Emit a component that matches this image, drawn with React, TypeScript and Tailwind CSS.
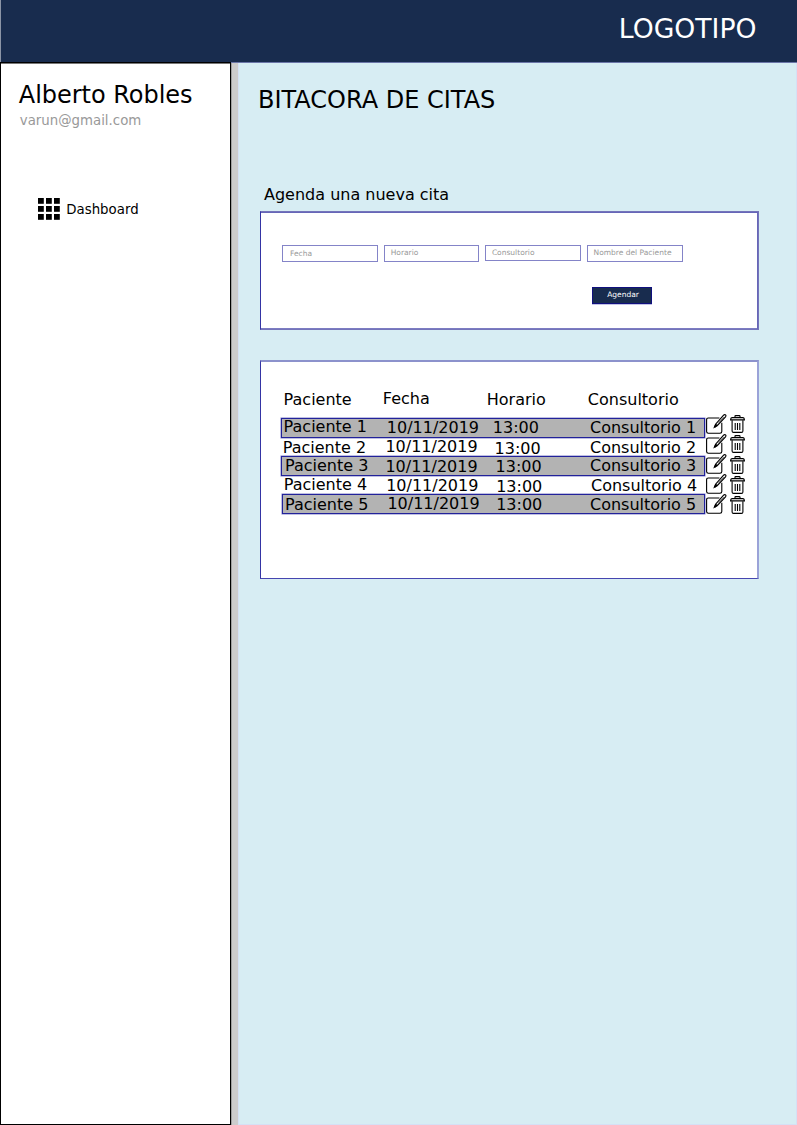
import React from "react";

type Cell = { text: string; at: string };
type Row = { box: string; cells: Cell[] };

const headers: Cell[] = [
  { text: "Paciente", at: "ml-[3.6px] mt-px" },
  { text: "Fecha", at: "ml-[2.8px]" },
  { text: "Horario", at: "ml-[6.8px] mt-px" },
  { text: "Consultorio", at: "ml-[7.8px] mt-px" },
];

const rows: Row[] = [
  {
    box: "ml-px h-5 border border-[#22229a] bg-[#b3b3b3] shadow-[0_0_0_0.5px_#8080c8]",
    cells: [
      { text: "Paciente 1", at: "ml-[1.6px] -mt-[2px]" },
      { text: "10/11/2019", at: "ml-[4.8px] -mt-px" },
      { text: "13:00", at: "ml-[10.8px] -mt-px" },
      { text: "Consultorio 1", at: "ml-[8px] -mt-px" },
    ],
  },
  {
    box: "h-[18px] pl-px",
    cells: [
      { text: "Paciente 2", at: "ml-[1.8px]" },
      { text: "10/11/2019", at: "ml-[4.4px] -mt-px" },
      { text: "13:00", at: "ml-[13.6px] mt-px" },
      { text: "Consultorio 2", at: "ml-[9px]" },
    ],
  },
  {
    box: "ml-px h-5 border border-[#22229a] bg-[#b3b3b3] shadow-[0_0_0_0.5px_#8080c8]",
    cells: [
      { text: "Paciente 3", at: "ml-[3px] -mt-px" },
      { text: "10/11/2019", at: "ml-[3.4px]" },
      { text: "13:00", at: "ml-[13.6px]" },
      { text: "Consultorio 3", at: "ml-[8px] -mt-px" },
    ],
  },
  {
    box: "h-[18px] pl-px",
    cells: [
      { text: "Paciente 4", at: "ml-[2.8px] -mt-px" },
      { text: "10/11/2019", at: "ml-[5.2px]" },
      { text: "13:00", at: "ml-[15.2px] mt-px" },
      { text: "Consultorio 4", at: "ml-[10px]" },
    ],
  },
  {
    box: "ml-[2px] h-5 border border-[#22229a] bg-[#b3b3b3] shadow-[0_0_0_0.5px_#8080c8]",
    cells: [
      { text: "Paciente 5", at: "ml-[2px]" },
      { text: "10/11/2019", at: "ml-[4.4px] -mt-px" },
      { text: "13:00", at: "ml-[13.2px]" },
      { text: "Consultorio 5", at: "ml-[7px]" },
    ],
  },
];

const fields = [
  { label: "Fecha", box: "h-[17px] pl-[7px] pt-[3px]" },
  { label: "Horario", box: "h-[17px] pl-[6px] pt-[2px]" },
  { label: "Consultorio", box: "h-4 pl-[5.5px] pt-[1.5px]" },
  { label: "Nombre del Paciente", box: "h-[17px] pl-[5.5px] pt-[2px]" },
];

const columns = "grid grid-cols-[100px_100px_100px_1fr]";

function EditIcon() {
  return (
    <svg className="block h-5 w-[21px] shrink-0 overflow-visible" viewBox="0 0 21 20" fill="none" stroke="#000">
      <path d="M13.4 4H2.3Q.6 4 .6 5.7V17.6Q.6 19.3 2.3 19.3H14Q15.8 19.3 15.8 17.6V8.8" strokeWidth="1.1" />
      <path d="M8.4 13.2L9.6 10.2L17.6 1.2Q18.7 .1 19.6 .9Q20.4 1.7 19.5 2.8L11.1 11.7Z" fill="#fff" strokeWidth="1.2" />
      <path d="M8.5 13.1L10.9 10.6" strokeWidth="1.8" />
      <path d="M12.6 8.7L17.8 3" strokeWidth=".5" />
    </svg>
  );
}

function TrashIcon() {
  return (
    <svg className="block h-[18px] w-[15px] shrink-0" viewBox="0 0 15 18" fill="none" stroke="#000" strokeWidth="1.1">
      <path d="M5 2.6V1.2Q5 .6 5.7 .6H9.3Q10 .6 10 1.2V2.6" />
      <path d="M1.9 2.7H13.1Q14.3 2.7 14.4 4.9H.6Q.7 2.7 1.9 2.7Z" fill="#fff" strokeWidth="1.2" />
      <path d="M2.1 5.2V16Q2.1 17.4 3.5 17.4H11.5Q12.9 17.4 12.9 16V5.2" />
      <path d="M5.2 8V15M7.5 8V15M9.8 8V15" />
    </svg>
  );
}

function GridIcon() {
  const steps = [0, 8, 16];
  return (
    <svg className="block size-[22px]" viewBox="0 0 22 22">
      {steps.map((y) => steps.map((x) => <rect key={`${x}-${y}`} x={x} y={y} width="5.8" height="5.8" />))}
    </svg>
  );
}

function Cells({ cells }: { cells: Cell[] }) {
  return (
    <>
      {cells.map((c) => (
        <div key={c.text} className="whitespace-nowrap">
          <div className={c.at}>{c.text}</div>
        </div>
      ))}
    </>
  );
}

export default function App() {
  return (
    <div className="flex h-[1125px] w-[797px] flex-col overflow-hidden bg-[#d7edf3] font-['DejaVu_Sans',sans-serif] text-black">
      <header className="flex h-[63px] shrink-0 justify-end border-b border-l border-b-[#6b76a8] border-l-[#8b95a6] bg-[#182c4e] pr-[40.5px] pt-[13px] text-[26.67px] leading-[31px] text-white">
        LOGOTIPO
      </header>
      <div className="flex min-h-0 flex-1">
        <aside className="-mt-px w-[231px] shrink-0 border border-black bg-white pl-[17.8px] shadow-[inset_0_1px_0_#777]">
          <h1 className="mt-[18px] text-[24px] leading-7 tracking-[-0.03px]">Alberto Robles</h1>
          <p className="ml-px mt-1 text-[13.33px] leading-4 text-[#999]">varun@gmail.com</p>
          <nav className="ml-[19.2px] mt-[69px] flex items-start gap-[6.3px]">
            <GridIcon />
            <span className="mt-1 text-[13.33px] leading-4">Dashboard</span>
          </nav>
        </aside>
        <div className="w-[7px] shrink-0 border-l border-[#a0a0a0] bg-[#ccc]" />
        <main className="min-w-0 flex-1 border-b border-l border-r border-[#d5e0f5] pl-[19px]">
          <h2 className="mt-[23px] text-[24px] leading-7">BITACORA DE CITAS</h2>
          <h3 className="ml-[6px] mt-[71px] text-[16px] leading-[19px]">Agenda una nueva cita</h3>
          <section className="ml-[2px] mt-[7px] h-[119px] w-[499px] border border-[#7474ba] border-l-[#3434a4] bg-white shadow-[inset_-1px_1px_0_#6666b8,inset_0_-1px_0_#7c7cc2]">
            <div className="ml-[21px] mt-[33px] flex items-start gap-[6px]">
              {fields.map((f) => (
                <div
                  key={f.label}
                  className={`w-[95.7px] whitespace-nowrap border border-[#8484c8] text-[7.5px] leading-[9px] text-[#999] ${f.box}`}
                >
                  {f.label}
                </div>
              ))}
            </div>
            <button className="ml-[331px] mt-[25px] block h-[17px] w-[60px] border border-[#10107e] bg-[#182c4e] pb-[3px] pl-[2px] text-[7.5px] leading-[9px] text-white shadow-[0_0.5px_0_#8888cc]">
              Agendar
            </button>
          </section>
          <section className="ml-[2px] mt-[30px] h-[219px] w-[499px] border border-r-2 border-t-2 border-b-[#4646b0] border-l-[#3434a4] border-r-[#9ba3d8] border-t-[#8c92cc] bg-white pl-[19px] pt-[27px] text-[16px] leading-[19px]">
            <div className={`${columns} h-[29px] w-[425px]`}>
              <Cells cells={headers} />
            </div>
            <div className="flex">
              <div className="w-[425px]">
                {rows.map((r, i) => (
                  <div key={i} className={`${columns} ${r.box}`}>
                    <Cells cells={r.cells} />
                  </div>
                ))}
              </div>
              <div className="-mt-[4px] ml-[1.4px] flex flex-col">
                {rows.map((_, i) => (
                  <EditIcon key={i} />
                ))}
              </div>
              <div className="-mt-[3px] ml-[2.6px] flex flex-col gap-[2.3px]">
                {rows.map((_, i) => (
                  <TrashIcon key={i} />
                ))}
              </div>
            </div>
          </section>
        </main>
      </div>
    </div>
  );
}
